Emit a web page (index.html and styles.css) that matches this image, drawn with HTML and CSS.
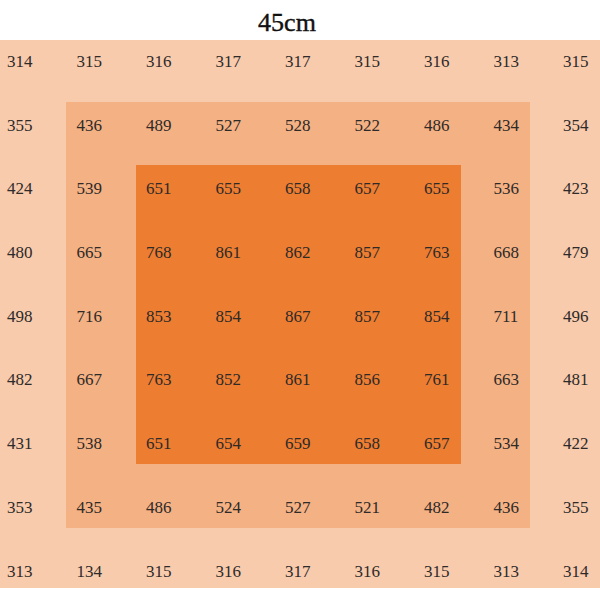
FILE: index.html
```html
<!DOCTYPE html>
<html>
<head>
<meta charset="utf-8">
<link rel="stylesheet" href="styles.css">
</head>
<body>
<div class="title">45cm</div>
<div class="map">
  <div class="layer zones">
    <div class="zone zone-mid"></div>
    <div class="zone zone-hot"></div>
  </div>
  <div class="layer cells">
    <div class="cell">314</div><div class="cell">315</div><div class="cell">316</div><div class="cell">317</div><div class="cell">317</div><div class="cell">315</div><div class="cell">316</div><div class="cell">313</div><div class="cell">315</div>
    <div class="cell">355</div><div class="cell">436</div><div class="cell">489</div><div class="cell">527</div><div class="cell">528</div><div class="cell">522</div><div class="cell">486</div><div class="cell">434</div><div class="cell">354</div>
    <div class="cell">424</div><div class="cell">539</div><div class="cell">651</div><div class="cell">655</div><div class="cell">658</div><div class="cell">657</div><div class="cell">655</div><div class="cell">536</div><div class="cell">423</div>
    <div class="cell">480</div><div class="cell">665</div><div class="cell">768</div><div class="cell">861</div><div class="cell">862</div><div class="cell">857</div><div class="cell">763</div><div class="cell">668</div><div class="cell">479</div>
    <div class="cell">498</div><div class="cell">716</div><div class="cell">853</div><div class="cell">854</div><div class="cell">867</div><div class="cell">857</div><div class="cell">854</div><div class="cell">711</div><div class="cell">496</div>
    <div class="cell">482</div><div class="cell">667</div><div class="cell">763</div><div class="cell">852</div><div class="cell">861</div><div class="cell">856</div><div class="cell">761</div><div class="cell">663</div><div class="cell">481</div>
    <div class="cell">431</div><div class="cell">538</div><div class="cell">651</div><div class="cell">654</div><div class="cell">659</div><div class="cell">658</div><div class="cell">657</div><div class="cell">534</div><div class="cell">422</div>
    <div class="cell">353</div><div class="cell">435</div><div class="cell">486</div><div class="cell">524</div><div class="cell">527</div><div class="cell">521</div><div class="cell">482</div><div class="cell">436</div><div class="cell">355</div>
    <div class="cell">313</div><div class="cell">134</div><div class="cell">315</div><div class="cell">316</div><div class="cell">317</div><div class="cell">316</div><div class="cell">315</div><div class="cell">313</div><div class="cell">314</div>
  </div>
</div>
</body>
</html>
```
FILE: styles.css
```css
html, body {
  margin: 0;
  padding: 0;
  background: #ffffff;
  width: 600px;
  height: 600px;
  overflow: hidden;
}
body {
  font-family: "Liberation Serif", "Times New Roman", serif;
  color: #2e2a28;
}
.title {
  height: 40px;
  box-sizing: border-box;
  padding-top: 7px;
  padding-right: 26px;
  font-size: 26px;
  line-height: 32px;
  text-align: center;
  color: #111;
  -webkit-text-stroke: 0.4px #111;
}
.map {
  width: 600px;
  height: 548px;
  overflow: hidden;
  background: #f8cbad;
  display: grid;
  grid-template-columns: 625.5px;
  grid-template-rows: 573.3px;
}
.layer {
  grid-area: 1 / 1;
  display: grid;
  grid-template-columns: repeat(9, 69.5px);
  grid-template-rows: repeat(9, 63.7px);
}
.zone-mid {
  grid-column: 2 / 9;
  grid-row: 2 / 9;
  margin: -1.7px 26px 21.6px -3.5px;
  background: #f4b183;
}
.zone-hot {
  grid-column: 3 / 8;
  grid-row: 3 / 8;
  margin: -2.4px 25.5px 21.5px -3px;
  background: #ed7d31;
}
.cell {
  padding: 12px 0 0 7px;
  font-size: 17px;
  line-height: 20px;
  white-space: nowrap;
}
```
